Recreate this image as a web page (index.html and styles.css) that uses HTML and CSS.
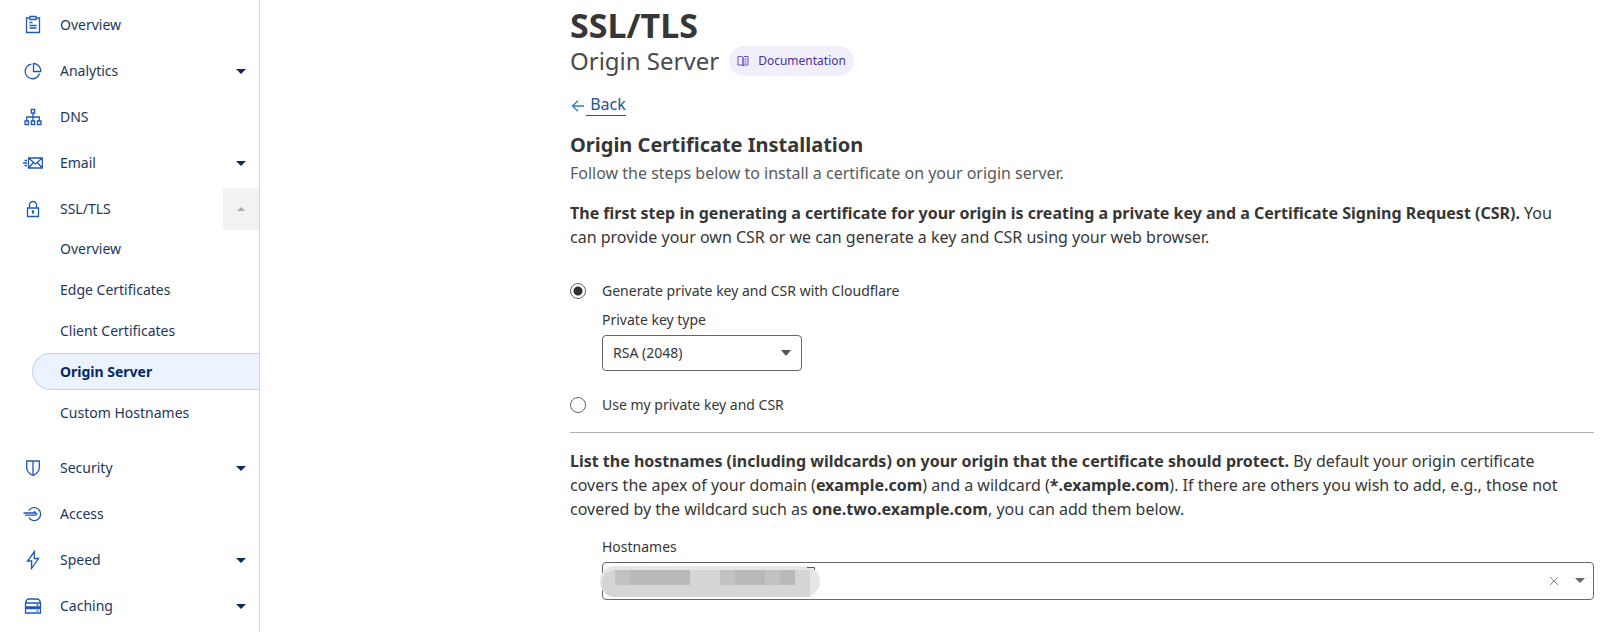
FILE: index.html
```html
<!DOCTYPE html>
<html lang="en">
<head>
    <meta charset="UTF-8">
    <meta name="viewport" content="width=device-width, initial-scale=1.0">
    <title>SSL/TLS - Origin Server</title>
    <link rel="stylesheet" href="styles.css">
</head>
<body>
    <nav class="sidebar">
        <ul class="menu">
            <li class="menu-item">
                <a href="#overview">
                    <svg class="icon" viewBox="0 0 20 20"><path d="M7 3H3.500v14.500h13V3H13M7 1.500h6V4.500H7zM6.500 7.500h3M6.500 10.500h7M6.500 13h7"/></svg>
                    Overview
                </a>
            </li>
            <li class="menu-item">
                <a href="#analytics">
                    <svg class="icon" viewBox="0 0 20 20"><path d="M8.500 3.200a7.300 7.300 0 1 0 8 9.300M10.500 2.500v8H17.800a7.500 7.500 0 0 0-7.300-8z"/></svg>
                    Analytics
                </a>
                <button class="toggle" aria-label="Expand Analytics"></button>
            </li>
            <li class="menu-item">
                <a href="#dns">
                    <svg class="icon" viewBox="0 0 20 20"><path d="M8.300 2.500h3.400V6H8.300zM10 6v8M3.700 14v-4h12.600v4M2 14h3.500v3.500H2zM8.300 14h3.400v3.500H8.300zM14.500 14H18v3.500h-3.500z"/></svg>
                    DNS
                </a>
            </li>
            <li class="menu-item">
                <a href="#email">
                    <svg class="icon" viewBox="0 0 20 20"><path d="M5.500 5H19.300v10H5.500zM5.500 5l7 6 6.800-6M5.500 15l5-5.500M19.300 15l-5-5.500M1.500 7.500h2.500M0 10h4M1.500 12.500h2.500"/></svg>
                    Email
                </a>
                <button class="toggle" aria-label="Expand Email"></button>
            </li>
            <li class="menu-item">
                <a href="#ssl">
                    <svg class="icon" viewBox="0 0 20 20"><path d="M4.500 9h11v8.500h-11zM6.500 9V6a3.500 3.500 0 0 1 7 0v3M10 13v2"/><circle cx="10" cy="12.500" r=".7"/></svg>
                    SSL/TLS
                </a>
                <button class="toggle open" aria-label="Collapse SSL/TLS"></button>
            </li>
        </ul>
        <ul class="submenu">
            <li><a href="#ssl-overview">Overview</a></li>
            <li><a href="#edge">Edge Certificates</a></li>
            <li><a href="#client">Client Certificates</a></li>
            <li><a href="#origin" class="active">Origin Server</a></li>
            <li><a href="#custom">Custom Hostnames</a></li>
        </ul>
        <ul class="menu">
            <li class="menu-item">
                <a href="#security">
                    <svg class="icon" viewBox="0 0 20 20"><path d="M3.700 3h12.600v6.500c0 4-3 6.500-6.300 8-3.300-1.500-6.300-4-6.300-8zM10 3v14"/></svg>
                    Security
                </a>
                <button class="toggle" aria-label="Expand Security"></button>
            </li>
            <li class="menu-item">
                <a href="#access">
                    <svg class="icon" viewBox="0 0 20 20"><path d="M5.800 6.500a6.500 6.500 0 1 1 0 7.200M.5 9h12.500M2 11.200h11.500M10.800 7.200l3 2.900-1.200 1.100"/></svg>
                    Access
                </a>
            </li>
            <li class="menu-item">
                <a href="#speed">
                    <svg class="icon" viewBox="0 0 20 20"><path d="M11.500 1.500L4.500 11h4.200L8.500 18.500 15.500 8.500h-4.300z"/></svg>
                    Speed
                </a>
                <button class="toggle" aria-label="Expand Speed"></button>
            </li>
            <li class="menu-item">
                <a href="#caching">
                    <svg class="icon" viewBox="0 0 20 20"><path d="M2.500 7C3 4.500 4 3 6 3h8c2 0 3 1.500 3.500 4v4h-15zM2.500 7h15M2.500 12.500h15V17h-15zM13.500 9h2M13.500 14.800h2"/></svg>
                    Caching
                </a>
                <button class="toggle" aria-label="Expand Caching"></button>
            </li>
        </ul>
    </nav>

    <main>
        <div class="content">
            <h1>SSL/TLS</h1>
            <div class="subtitle">
                <span>Origin Server</span>
                <a href="#docs" class="docs">
                    <svg viewBox="0 0 12 12"><path d="M1 1.500h4L6 2.500v8.500L5 10H1zM11 1.500H7L6 2.500v8.500L7 10h4zM7.500 4h2M7.500 6h2M7.500 8h2"/></svg>
                    Documentation
                </a>
            </div>

            <a href="#back" class="back">
                <svg viewBox="0 0 16 16"><path d="M14 9H2.500M8 3.800L2.500 9 8 14.200"/></svg>
                <span>&nbsp;Back</span>
            </a>

            <h2>Origin Certificate Installation</h2>
            <p class="lead">Follow the steps below to install a certificate on your origin server.</p>
            <p><strong>The first step in generating a certificate for your origin is creating a private key and a Certificate Signing Request (CSR).</strong> You can provide your own CSR or we can generate a key and CSR using your web browser.</p>

            <form>
                <div class="option">
                    <input type="radio" name="csr" id="generate" checked>
                    <label for="generate">Generate private key and CSR with Cloudflare</label>
                </div>
                <div class="field">
                    <label for="key-type">Private key type</label>
                    <div class="select-box">
                        <select id="key-type">
                            <option>RSA (2048)</option>
                            <option>ECC</option>
                        </select>
                    </div>
                </div>
                <div class="option">
                    <input type="radio" name="csr" id="own">
                    <label for="own">Use my private key and CSR</label>
                </div>
                <hr>
                <p><strong>List the hostnames (including wildcards) on your origin that the certificate should protect.</strong> By default your origin certificate covers the apex of your domain (<strong>example.com</strong>) and a wildcard (<strong>*.example.com</strong>). If there are others you wish to add, e.g., those not covered by the wildcard such as <strong>one.two.example.com</strong>, you can add them below.</p>
                <div class="field hostnames">
                    <label for="hostnames">Hostnames</label>
                    <div class="combo">
                        <input type="text" id="hostnames">
                        <button type="button" class="clear" aria-label="Clear">
                            <svg viewBox="0 0 10 10"><path d="M1 1l8 8M9 1L1 9"/></svg>
                        </button>
                        <button type="button" class="drop" aria-label="Show options"></button>
                        <svg class="redacted" viewBox="0 0 220 34">
                            <path fill="#e6e6e6" d="M14 1H205a15 15.500 0 0 1 0 31H14A14 15.500 0 0 1 14 1z"/>
                            <path fill="#d5d5d5" d="M15 5h195v27H15A13.500 13.500 0 0 1 15 5z"/>
                            <path fill="#c2c2c2" d="M15 5h15v15H15zM120 5h15v15h-15zM165 5h15v15h-15z"/>
                            <path fill="#b9b9b9" d="M30 5h60v15H30zM135 5h30v15h-30zM180 5h15v15h-15z"/>
                            <path fill="none" stroke="#555" d="M207 2.500h7.500V5"/>
                        </svg>
                    </div>
                </div>
            </form>
        </div>
    </main>
</body>
</html>
```
FILE: styles.css
```css
* { box-sizing: border-box; }
body {
    margin: 0; display: flex; min-height: 100vh; background: #fff; color: #363636;
    font-family: "Noto Sans", "Open Sans", sans-serif; font-size: 16px; line-height: 24px;
}
ul { list-style: none; margin: 0; padding: 0; }

/* Sidebar */
.sidebar {
    width: 260px; flex-shrink: 0; padding-top: 2px; border-right: 1px solid #d5d7d8; font-size: 14px;
}
.sidebar a { color: #1d3660; text-decoration: none; }
.menu-item { display: flex; align-items: center; height: 46px; }
.menu-item a { flex: 1; display: flex; align-items: center; gap: 17px; padding-left: 23px; }
.icon { width: 20px; height: 20px; fill: none; stroke: #2058b0; stroke-width: 1.3; }
.toggle {
    width: 36px; height: 42px; border: none; padding: 0; background: none;
    display: flex; align-items: center; justify-content: center; cursor: pointer;
}
.toggle::before {
    content: ""; border: 5px solid transparent; border-top-color: #0c2a5c; border-bottom: none;
}
.toggle.open { background: #f2f2f2; }
.toggle.open::before {
    border: 4px solid transparent; border-bottom-color: #aaa; border-top: none;
}
.submenu { padding-bottom: 10px; }
.submenu a {
    display: flex; align-items: center; height: 37px; margin: 0 0 4px 32px; padding-left: 27px;
    border: 1px solid transparent; border-right: none; border-radius: 19px 0 0 19px;
}
.submenu li:first-child a { margin-top: -2px; }
.submenu .active { background: #ebf3fe; border-color: #bcd3f2; color: #062a63; font-weight: bold; }

/* Main */
main { flex: 1; padding: 7px 26px 0 40px; }
.content { max-width: 1024px; margin-left: auto; }
h1 { margin: 0; font-size: 34px; line-height: 36px; }
.subtitle { display: flex; align-items: center; gap: 10px; margin-top: 1px; font-size: 24px; line-height: 34px; color: #4a4a4a; }
.docs {
    display: flex; align-items: center; gap: 9px; height: 30px; padding: 0 8px; border-radius: 15px;
    background: #f2effc; color: #4a2f9e; font-size: 12px; text-decoration: none;
}
.docs svg { width: 12px; height: 12px; fill: none; stroke: #6b4fc4; }
.back { display: inline-flex; align-items: center; margin-top: 15px; color: #1f5394; text-decoration: none; line-height: 22px; }
.back svg { width: 16px; height: 16px; fill: none; stroke: #2f7bbf; stroke-width: 1.3; }
.back span { border-bottom: 1px solid #1f5394; }
h2 { margin: 12px 0 0; font-size: 20px; line-height: 28px; }
p { margin: 0; padding-right: 16px; }
.lead { margin: 2px 0 16px; color: #595959; }

/* Form */
form { margin-top: 32px; font-size: 14px; }
form p { font-size: 16px; }
.option { display: flex; align-items: center; gap: 16px; height: 20px; }
.option input {
    appearance: none; width: 16px; height: 16px; margin: 0; border: 1px solid #666; border-radius: 50%;
}
.option input:checked { background: radial-gradient(#313131 4px, transparent 5px); }
.field { margin: 8px 0 24px 32px; }
.field label { display: block; line-height: 22px; }
.select-box { position: relative; width: 200px; margin-top: 4px; }
.select-box::after {
    content: ""; position: absolute; right: 11px; top: 15px; pointer-events: none;
    border: 5px solid transparent; border-top: 6px solid #555; border-bottom: none;
}
select {
    appearance: none; width: 100%; height: 36px; padding: 0 10px; border: 1px solid #666; border-radius: 4px;
    background: #fff; color: #363636; font: inherit;
}
hr { margin: 17px 0 16px; border: none; border-top: 1px solid #b0b2b5; }
.hostnames { margin-top: 15px; }
.combo {
    position: relative; display: flex; align-items: center; height: 38px; margin-top: 4px; padding-right: 8px;
    border: 1px solid #666; border-radius: 4px;
}
.combo input { flex: 1; height: 36px; padding: 0 10px; border: none; background: none; font: inherit; }
.combo button { display: flex; padding: 0; border: none; background: none; cursor: pointer; }
.clear { margin-right: 16px; }
.clear svg { width: 10px; height: 10px; fill: none; stroke: #888; }
.drop::before {
    content: ""; border: 5px solid transparent; border-top-color: #666; border-bottom: none;
}
.redacted { position: absolute; left: -3px; top: 2px; width: 220px; height: 34px; }
```
